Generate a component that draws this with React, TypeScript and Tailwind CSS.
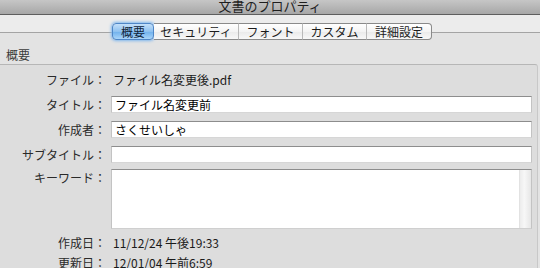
import React from "react";

const font = "font-['Noto_Sans_CJK_JP','Noto_Sans',sans-serif]";

const tabs = [
  { label: "概要", w: "w-[42px]", active: true },
  { label: "セキュリティ", w: "w-[85px]" },
  { label: "フォント", w: "w-[64px]" },
  { label: "カスタム", w: "w-[64px]" },
  { label: "詳細設定", w: "w-[65px]" },
];

function Label({ children }: { children: React.ReactNode }) {
  return <div className="w-[106px] shrink-0 text-right text-[12px] leading-[17px] text-[#2a2a2a]">{children}</div>;
}

function Field({ value }: { value?: string }) {
  return (
    <div className="ml-[5px] h-[17px] w-[421px] border-t border-t-[#8d8d8d] border-x border-x-[#c3c3c3] border-b border-b-[#d6d6d6] bg-white pl-[3px] text-[12px] leading-[15px] text-black">
      {value}
    </div>
  );
}

export default function App() {
  return (
    <div className={`h-[268px] w-[540px] overflow-hidden bg-[#e3e3e3] ${font}`}>
      {/* title bar */}
      <div className="flex h-[15px] items-center justify-center overflow-hidden border-b border-[#5e5e5e] bg-[linear-gradient(#c6c6c6,#a7a7a7)] text-[13px] leading-none text-[#1e1e1e]">
        <span className="-mt-[3px]">文書のプロパティ</span>
      </div>

      {/* toolbar with tabs */}
      <div className="h-[49px] bg-[linear-gradient(to_bottom,#ececec_0,#ececec_17px,#a4a4a4_17px,#a4a4a4_18px,#e3e3e3_18px)]">
        <div className="flex pl-[112px] pt-[8px]">
          {tabs.map((t, i) => (
            <div
              key={t.label}
              className={`${t.w} flex h-[17px] items-center justify-center text-[12px] leading-none ${
                t.active
                  ? "rounded-[4px] border border-[#4f86c6] bg-[linear-gradient(#c4e0fa,#8ec1f0_50%,#6fb0ec_51%,#a9d5fa)] text-[#10243a] shadow-[0_0_3px_1px_#7eb6ee]"
                  : `border-y border-[#8a8a8a] bg-[linear-gradient(#ffffff,#f4f4f4_50%,#eaeaea_51%,#f8f8f8)] text-[#1c1c1c] ${
                      i === tabs.length - 1 ? "rounded-r-[4px] border-r" : "border-r border-r-[#b9b9b9]"
                    }`
              }`}
            >
              {t.label}
            </div>
          ))}
        </div>
        <div className="mt-[9px] pl-[6px] text-[12px] leading-[12px] text-[#3a3a3a]">概要</div>
      </div>

      {/* group box */}
      <div className="mr-[2px] h-[204px] rounded-tr-[3px] border-t border-r border-t-[#b6b6b6] border-r-[#c8c8c8] bg-[#dddddd] pt-[6px]">
        <div className="flex items-center">
          <Label>ファイル：</Label>
          <div className="ml-[7px] text-[12px] leading-[17px] text-[#1a1a1a]">ファイル名変更後.pdf</div>
        </div>
        <div className="mt-[8px] flex items-center">
          <Label>タイトル：</Label>
          <Field value="ファイル名変更前" />
        </div>
        <div className="mt-[8px] flex items-center">
          <Label>作成者：</Label>
          <Field value="さくせいしゃ" />
        </div>
        <div className="mt-[8px] flex items-center">
          <Label>サブタイトル：</Label>
          <Field />
        </div>
        <div className="mt-[6px] flex items-start">
          <div className="pt-[-1px]">
            <Label>キーワード：</Label>
          </div>
          <div className="ml-[5px] flex h-[60px] w-[421px] border-t border-t-[#8d8d8d] border-x border-x-[#c3c3c3] border-b border-b-[#cfcfcf] bg-white">
            <div className="flex-1" />
            <div className="w-[12px] border-l border-[#e2e2e2] bg-[linear-gradient(to_right,#ececec,#f7f7f7_40%,#e6e6e6)]" />
          </div>
        </div>
        <div className="mt-[5px] flex items-center">
          <Label>作成日：</Label>
          <div className="ml-[7px] text-[12px] leading-[17px] text-[#1a1a1a]">11/12/24 午後19:33</div>
        </div>
        <div className="mt-[3px] flex items-center">
          <Label>更新日：</Label>
          <div className="ml-[7px] text-[12px] leading-[17px] text-[#1a1a1a]">12/01/04 午前6:59</div>
        </div>
      </div>
    </div>
  );
}
